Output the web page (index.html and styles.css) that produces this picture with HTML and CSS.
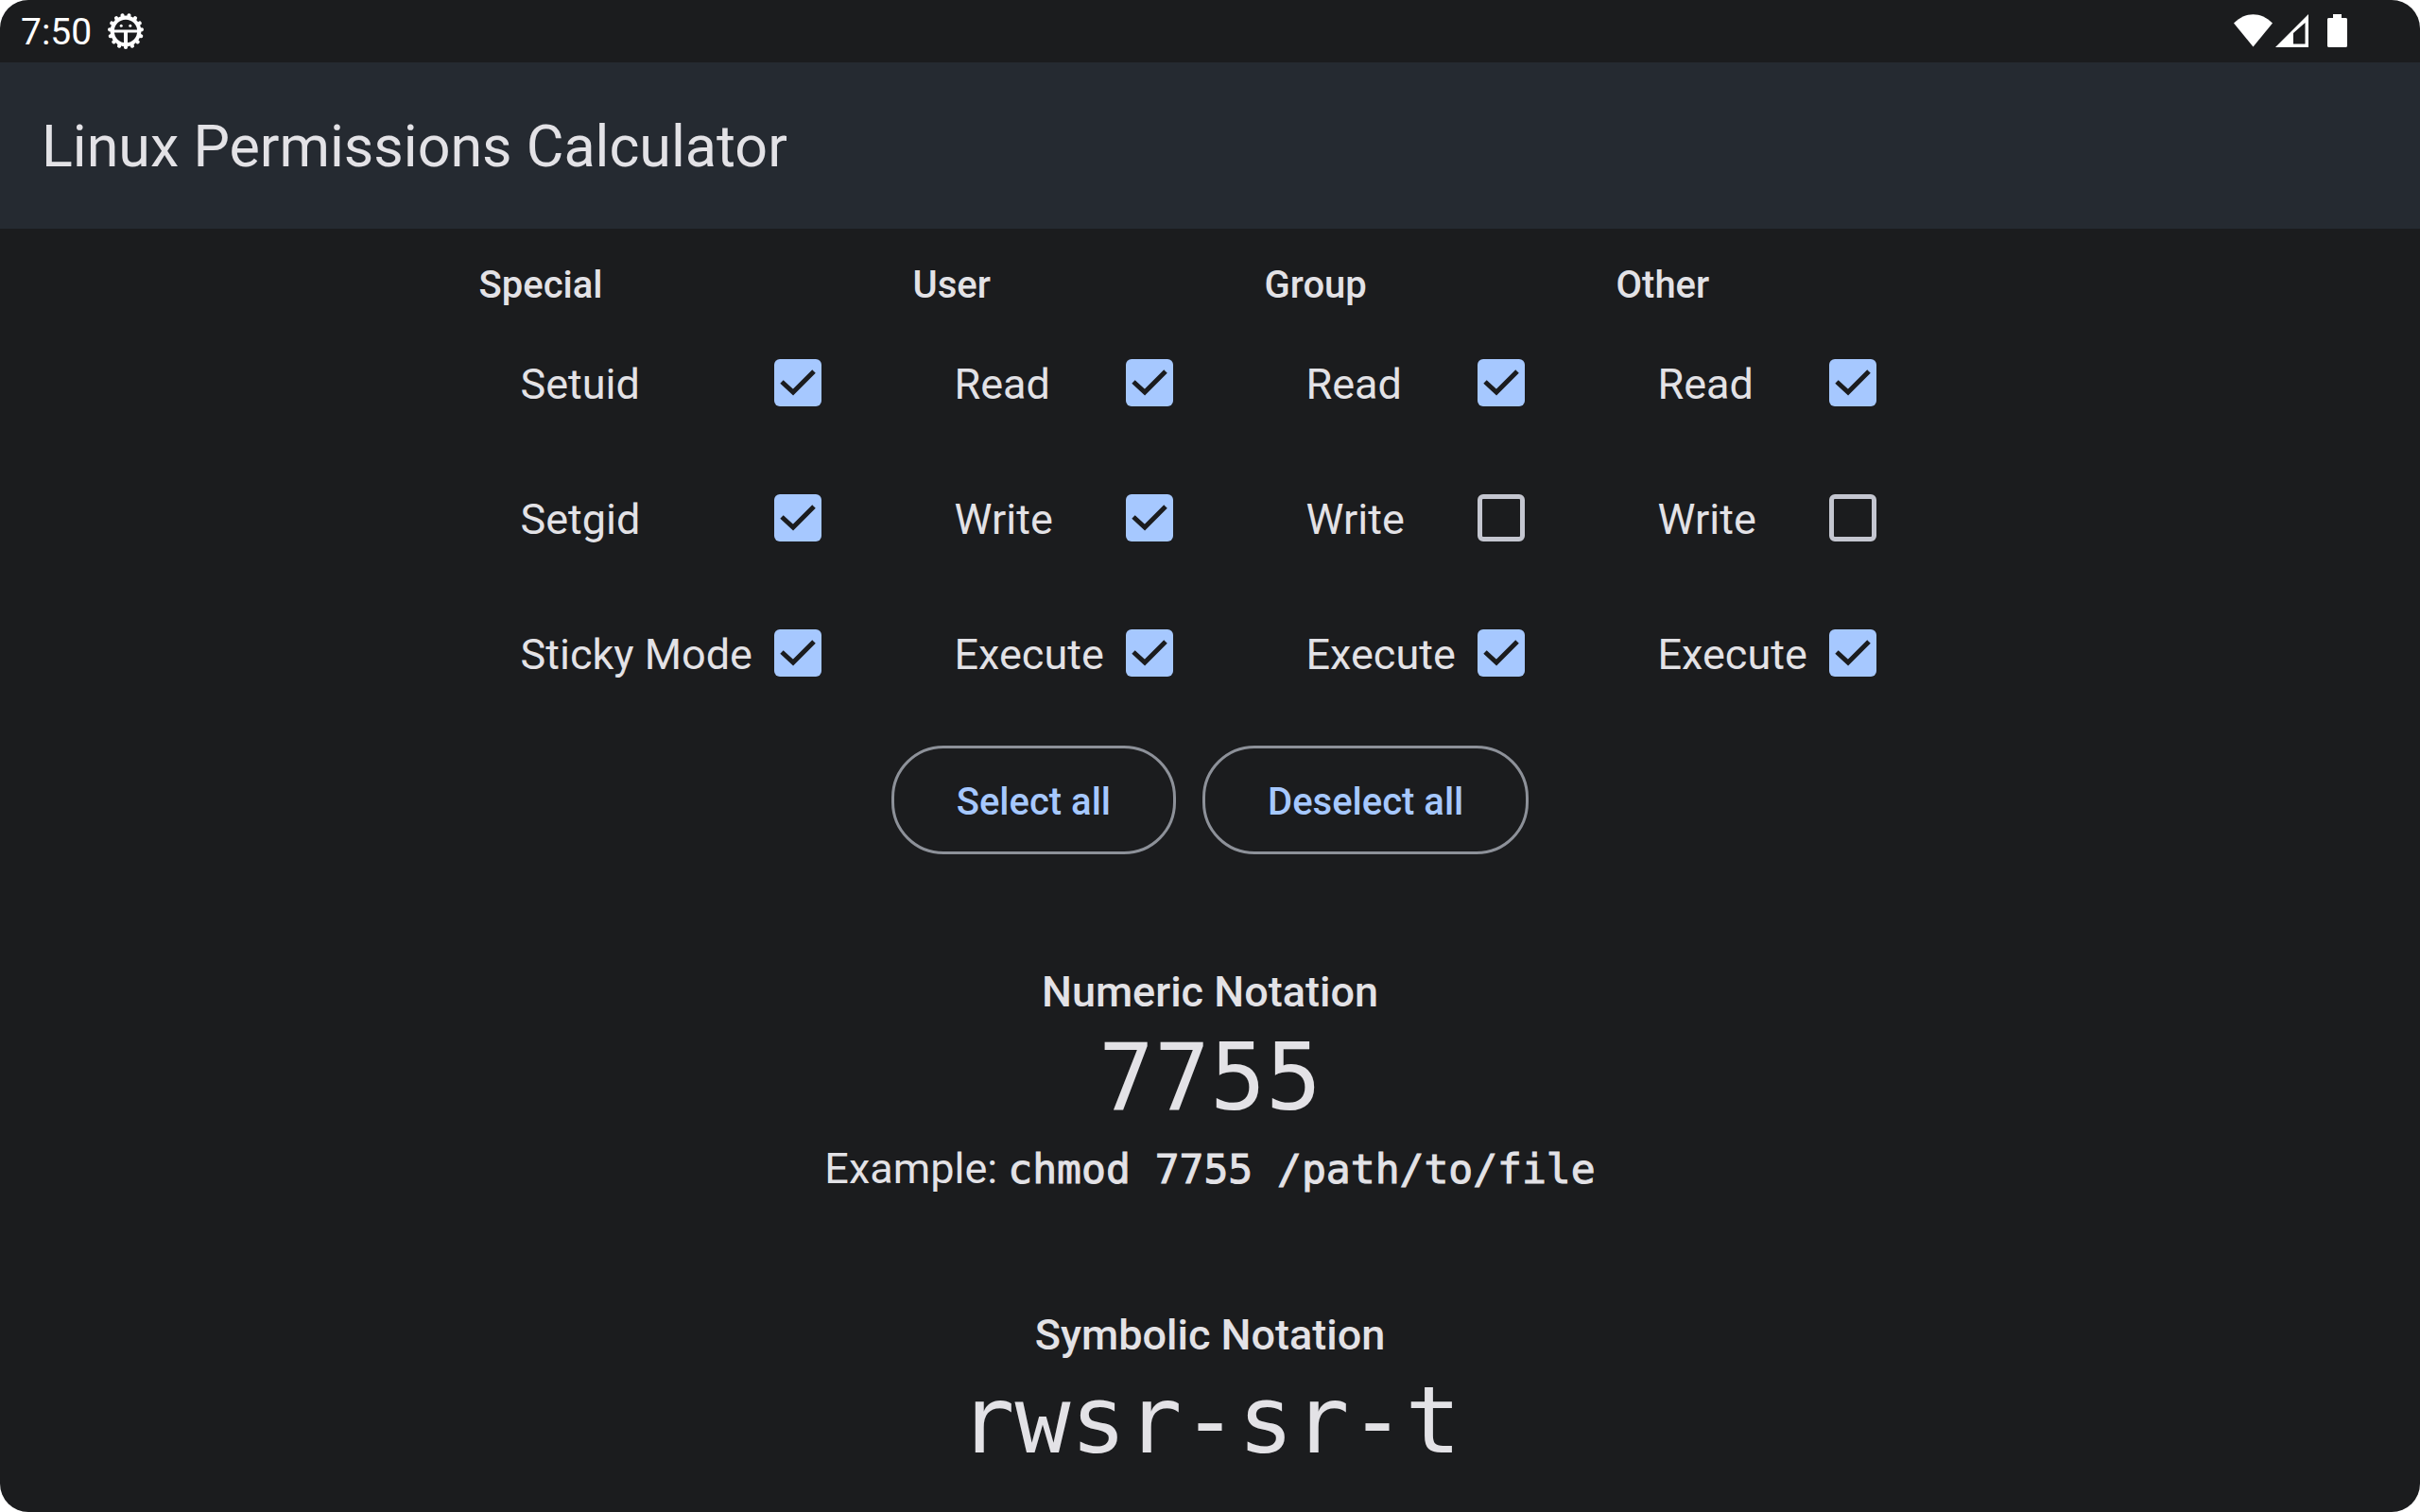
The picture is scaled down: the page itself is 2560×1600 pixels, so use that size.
FILE: index.html
```html
<!DOCTYPE html>
<html lang="en">
<head>
<meta charset="utf-8">
<meta name="viewport" content="width=device-width, initial-scale=1">
<title>Linux Permissions Calculator</title>
<link rel="stylesheet" href="styles.css">
</head>
<body>
<div class="app">
  <div class="status-bar">
    <div class="status-group">
      <span class="clock">7:50</span>
      <svg class="icon-debug" viewBox="0 0 40 40" aria-hidden="true">
        <circle cx="20" cy="20" r="14.300" fill="none" stroke="#fff" stroke-width="4.200"/>
        <circle cx="20" cy="20" r="17" fill="none" stroke="#fff" stroke-width="4.200" stroke-linecap="round" pathLength="150" stroke-dasharray="0.010 9.990" stroke-dashoffset="-7.500"/>
        <path d="M7 20h26" fill="none" stroke="#fff" stroke-width="3"/>
        <path d="M20 20v14" fill="none" stroke="#fff" stroke-width="4"/>
        <circle cx="15.200" cy="14.300" r="1.500" fill="#fff"/>
        <circle cx="24.800" cy="14.300" r="1.500" fill="#fff"/>
      </svg>
    </div>
    <div class="status-group status-system">
      <svg class="icon-signal" viewBox="0 0 80 36" aria-hidden="true">
        <path d="M0 9.500C12-3 29-3 41 9.500L20.500 34.500z" fill="#fff"/>
        <path fill-rule="evenodd" d="M44 35L79 0V35zM63 20V31.500H75.500V9z" fill="#fff"/>
      </svg>
      <svg class="icon-battery" viewBox="0 0 21 36" aria-hidden="true">
        <path d="M6 0h9v4h5l1 1v29l-1 1H1l-1-1V5l1-1h5z" fill="#fff"/>
      </svg>
    </div>
  </div>
  <header class="app-bar">
    <h1 class="app-title">Linux Permissions Calculator</h1>
  </header>
  <main class="content">
    <form class="calculator">
      <div class="columns">
        <fieldset class="column">
          <legend class="column-title">Special</legend>
          <label class="option"><span class="option-name">Setuid</span><input class="check" type="checkbox" checked></label>
          <label class="option"><span class="option-name">Setgid</span><input class="check" type="checkbox" checked></label>
          <label class="option"><span class="option-name">Sticky Mode</span><input class="check" type="checkbox" checked></label>
        </fieldset>
        <fieldset class="column">
          <legend class="column-title">User</legend>
          <label class="option"><span class="option-name">Read</span><input class="check" type="checkbox" checked></label>
          <label class="option"><span class="option-name">Write</span><input class="check" type="checkbox" checked></label>
          <label class="option"><span class="option-name">Execute</span><input class="check" type="checkbox" checked></label>
        </fieldset>
        <fieldset class="column">
          <legend class="column-title">Group</legend>
          <label class="option"><span class="option-name">Read</span><input class="check" type="checkbox" checked></label>
          <label class="option"><span class="option-name">Write</span><input class="check" type="checkbox"></label>
          <label class="option"><span class="option-name">Execute</span><input class="check" type="checkbox" checked></label>
        </fieldset>
        <fieldset class="column">
          <legend class="column-title">Other</legend>
          <label class="option"><span class="option-name">Read</span><input class="check" type="checkbox" checked></label>
          <label class="option"><span class="option-name">Write</span><input class="check" type="checkbox"></label>
          <label class="option"><span class="option-name">Execute</span><input class="check" type="checkbox" checked></label>
        </fieldset>
      </div>
      <div class="actions">
        <button class="button" type="button">Select all</button>
        <button class="button" type="button">Deselect all</button>
      </div>
    </form>
    <section class="notation">
      <h2 class="notation-title">Numeric Notation</h2>
      <p class="notation-value">7755</p>
      <p class="example">Example: <code class="command">chmod 7755 /path/to/file</code></p>
    </section>
    <section class="notation">
      <h2 class="notation-title">Symbolic Notation</h2>
      <p class="notation-value">rwsr-sr-t</p>
    </section>
  </main>
</div>
</body>
</html>
```

FILE: styles.css
```css
:root {
  --surface: #1b1c1e;
  --bar: #252a31;
  --text: #e3e2e6;
  --primary: #a6c8ff;
  --outline: #8d9199;
  --mono: "DejaVu Sans Mono", monospace;
}

* {
  box-sizing: border-box;
}

body {
  margin: 0;
  background: #fff;
  font-family: Roboto, sans-serif;
  font-size: 45px;
  color: var(--text);
}

h1, h2, p {
  margin: 0;
}

.app {
  min-height: 100vh;
  background: var(--surface);
  border-radius: 30px;
  overflow: hidden;
}

.status-bar {
  display: flex;
  justify-content: space-between;
  height: 66px;
  padding: 0 77px 0 22px;
  color: #fff;
}

.status-group {
  display: flex;
  align-items: center;
  gap: 16px;
}

.status-system {
  gap: 19px;
}

.clock {
  padding-top: 2px;
  font-size: 39px;
  line-height: 66px;
}

.icon-debug {
  width: 40px;
  height: 40px;
}

.icon-signal {
  width: 80px;
  height: 36px;
}

.icon-battery {
  width: 21px;
  height: 36px;
}

.app-bar {
  display: flex;
  align-items: center;
  height: 176px;
  padding: 2px 44px 0;
  background: var(--bar);
}

.app-title {
  font-size: 61px;
  line-height: 78px;
  font-weight: 400;
}

.content {
  display: flex;
  flex-direction: column;
  align-items: center;
  padding: 28px 44px 0;
}

.columns {
  display: grid;
  grid-template-columns: 431px repeat(3, 344px);
  justify-content: center;
  column-gap: 28px;
}

.column {
  min-width: 0;
  margin: 0;
  padding: 0;
  border: 0;
}

.column-title {
  padding: 0;
  font-size: 40px;
  line-height: 63px;
  font-weight: 500;
}

.option {
  display: flex;
  align-items: center;
  justify-content: space-between;
  height: 143px;
  padding: 0 69px 0 44px;
}

.option-name {
  padding-top: 5px;
  line-height: 66px;
  white-space: nowrap;
}

.check {
  appearance: none;
  flex: none;
  width: 50px;
  height: 50px;
  margin: 0;
  border: 5px solid #c4c6d0;
  border-radius: 6px;
}

.check:checked {
  border: 0;
  background: var(--primary) url("data:image/svg+xml,%3Csvg xmlns='http://www.w3.org/2000/svg' viewBox='0 0 50 50'%3E%3Cpath d='M8 24L20 35L42 13' fill='none' stroke='%231b1c1e' stroke-width='5'/%3E%3C/svg%3E") center / 50px no-repeat;
}

.actions {
  display: flex;
  justify-content: center;
  gap: 28px;
  margin-top: 27px;
}

.button {
  height: 115px;
  padding: 4px 66px 0;
  border: 3px solid var(--outline);
  border-radius: 55px;
  background: transparent;
  color: var(--primary);
  font: 500 40px/54px Roboto, sans-serif;
}

.notation {
  margin-top: 113px;
  text-align: center;
}

.notation + .notation {
  margin-top: 103px;
}

.notation-title {
  font-size: 45px;
  line-height: 66px;
  font-weight: 500;
}

.notation-value {
  font-family: var(--mono);
  font-size: 98px;
  line-height: 114px;
}

.example {
  line-height: 80px;
}

.command {
  font-family: var(--mono);
  font-size: 43px;
  -webkit-text-stroke: 1px currentColor;
}
```
